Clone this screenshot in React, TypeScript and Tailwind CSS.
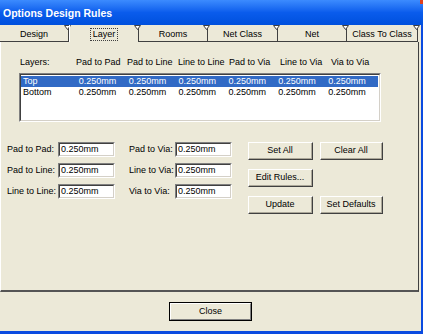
const tabs = [
  { label: "Design", w: "w-[69px]" },
  { label: "Layer", w: "w-[70px]", active: true },
  { label: "Rooms", w: "w-[69px]" },
  { label: "Net Class", w: "w-[70px]" },
  { label: "Net", w: "w-[69px]" },
  { label: "Class To Class", w: "w-[71px]" },
];

const columns = ["Pad to Pad", "Pad to Line", "Line to Line", "Pad to Via", "Line to Via", "Via to Via"];

const layers = [
  { name: "Top", selected: true },
  { name: "Bottom", selected: false },
];

const Notch = () => (
  <svg className="absolute -right-[3px] top-0" width="7" height="5" viewBox="0 0 7 5">
    <polygon points="0.5,0.5 6.5,0.5 3.5,4.5" fill="#ffffff" stroke="#404040" strokeWidth="1" />
  </svg>
);

const Field = ({ label, labelW }: { label: string; labelW: string }) => (
  <div className="flex items-center h-[15px]">
    <span className={`${labelW} shrink-0`}>{label}</span>
    <div className="w-[57px] h-[15px] border-t border-l border-[#808080] border-b-white border-r-white border-b border-r">
      <div className="h-full border-t border-l border-[#404040] border-b-[#D4D0C8] border-r-[#D4D0C8] border-b border-r bg-white pl-[1px] leading-[11px]">
        0.250mm
      </div>
    </div>
  </div>
);

const Button = ({ label, w }: { label: string; w: string }) => (
  <button className={`${w} h-[18px] bg-[#ECE9D8] border-t border-l border-white border-b border-r border-b-[#404040] border-r-[#404040]`}>
    <div className="h-full border-b border-r border-[#ACA899] border-t-0 border-l-0 flex items-center justify-center">
      {label}
    </div>
  </button>
);

export default function App() {
  return (
    <div className="w-[423px] h-[334px] bg-[#ECE9D8] flex flex-col text-[9px] text-black font-['Liberation_Sans',Arial,sans-serif] overflow-hidden">
      {/* title bar */}
      <div className="h-[25px] shrink-0 flex items-start justify-between bg-gradient-to-b from-[#3C8BFE] via-[#0A5CEC] to-[#0050DD]">
        <span className="pl-[3px] pt-[7px] text-white font-bold text-[10.5px] leading-[12px]">
          Options Design Rules
        </span>
        <div className="w-[3px] h-[4px] bg-[#E0401E]" />
      </div>

      <div className="flex-1 flex flex-col border-r-[2px] border-b-[3px] border-[#0B4BE0]">
        {/* tabs */}
        <div className="flex h-[17px] shrink-0">
          {tabs.map((t) => (
            <div
              key={t.label}
              className={`${t.w} relative flex items-center justify-center pt-[2px] border-r border-r-[#404040] ${
                t.active ? "border-l border-l-white" : "border-b border-b-[#404040]"
              }`}
            >
              {t.active ? (
                <span className="outline outline-1 outline-dotted outline-[#404040] px-[2px] leading-[11px]">{t.label}</span>
              ) : (
                <span className="leading-[11px]">{t.label}</span>
              )}
              <Notch />
            </div>
          ))}
        </div>

        {/* panel */}
        <div className="w-[419px] h-[250px] shrink-0 border-l border-l-white border-r border-r-[#404040] border-b-2 border-b-[#555] pt-[15px]">
          <div className="flex pl-[19px] leading-[11px]">
            <span className="w-[56px]">Layers:</span>
            {columns.map((c) => (
              <span key={c} className="w-[51px] whitespace-nowrap">
                {c}
              </span>
            ))}
          </div>

          <div className="ml-[18px] mt-[5px] w-[362px] h-[49px] border-t border-l border-[#808080] border-b border-r border-b-white border-r-white">
            <div className="h-full bg-white border-t border-l border-[#404040] border-b border-r border-b-[#D4D0C8] border-r-[#D4D0C8] pt-[1px]">
              {layers.map((l) => (
                <div
                  key={l.name}
                  className={`flex h-[11px] leading-[11px] pl-[2px] mr-[1px] ${
                    l.selected ? "bg-[#316AC5] text-white" : ""
                  }`}
                >
                  <span className="w-[57px]">{l.name}</span>
                  {columns.map((c) => (
                    <span key={c} className="w-[51px]">
                      0.250mm
                    </span>
                  ))}
                </div>
              ))}
            </div>
          </div>

          <div className="flex mt-[20px] pl-[6px]">
            <div className="flex flex-col gap-[6px]">
              <Field label="Pad to Pad:" labelW="w-[51px]" />
              <Field label="Pad to Line:" labelW="w-[51px]" />
              <Field label="Line to Line:" labelW="w-[51px]" />
            </div>
            <div className="flex flex-col gap-[6px] ml-[14px]">
              <Field label="Pad to Via:" labelW="w-[46px]" />
              <Field label="Line to Via:" labelW="w-[46px]" />
              <Field label="Via to Via:" labelW="w-[46px]" />
            </div>
            <div className="flex flex-col gap-[9px] ml-[16px]">
              <div className="flex gap-[7px]">
                <Button label="Set All" w="w-[65px]" />
                <Button label="Clear All" w="w-[63px]" />
              </div>
              <Button label="Edit Rules..." w="w-[65px]" />
              <div className="flex gap-[7px]">
                <Button label="Update" w="w-[65px]" />
                <Button label="Set Defaults" w="w-[63px]" />
              </div>
            </div>
          </div>
        </div>

        {/* bottom */}
        <div className="flex-1 flex items-center justify-center">
          <button className="w-[83px] h-[19px] bg-[#ECE9D8] border border-black">
            <div className="h-full border-t border-l border-white border-b border-r border-b-[#808080] border-r-[#808080] flex items-center justify-center">
              Close
            </div>
          </button>
        </div>
      </div>
    </div>
  );
}
